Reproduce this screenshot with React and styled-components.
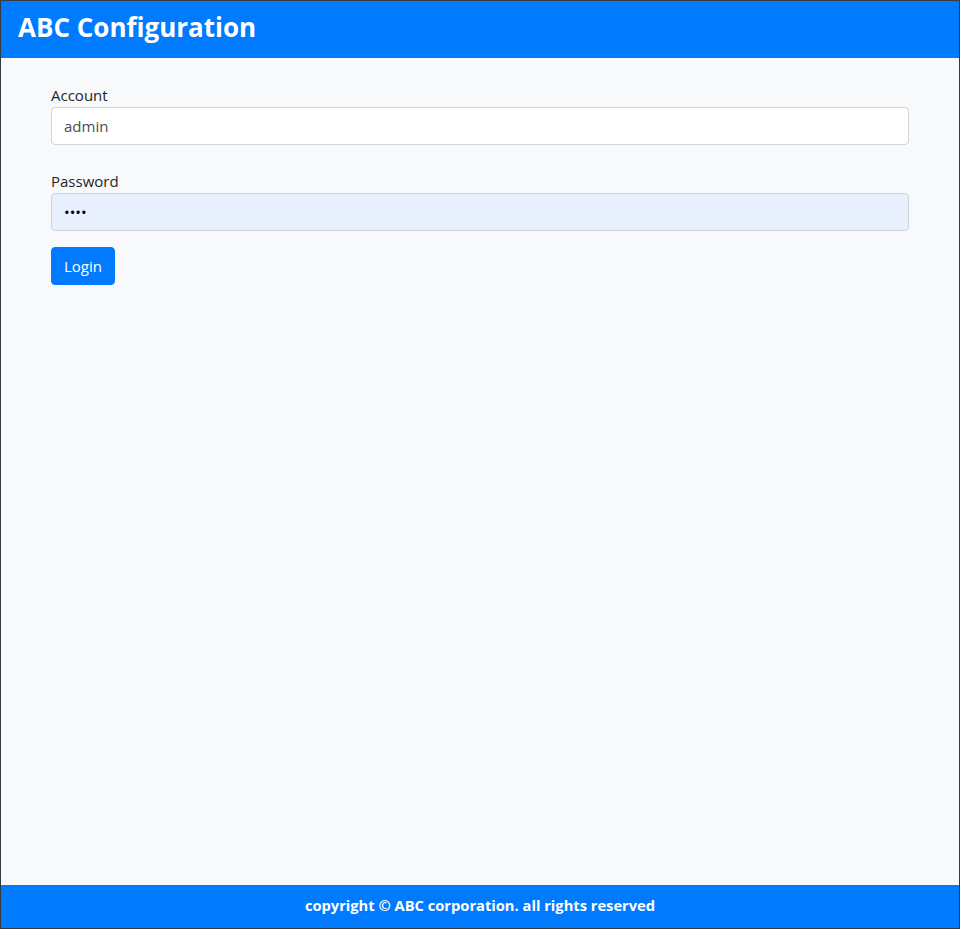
import React from "react";
import styled, { createGlobalStyle } from "styled-components";

const GlobalStyle = createGlobalStyle`
  html, body {
    margin: 0;
    padding: 0;
  }
  body {
    font-family: "Open Sans", "Noto Sans", sans-serif;
    font-size: 15px;
    color: #212529;
  }
  * {
    box-sizing: border-box;
  }
`;

const App = () => {
  return (
    <Page>
      <GlobalStyle />
      <Header>
        <Brand>ABC Configuration</Brand>
      </Header>
      <Main>
        <Form onSubmit={(e) => e.preventDefault()}>
          <Group>
            <Label htmlFor="account">Account</Label>
            <Input id="account" type="text" defaultValue="admin" />
          </Group>
          <Group last>
            <Label htmlFor="password">Password</Label>
            <Input id="password" type="password" defaultValue="1234" autofill />
          </Group>
          <Button type="submit">Login</Button>
        </Form>
      </Main>
      <Footer>copyright © ABC corporation. all rights reserved</Footer>
    </Page>
  );
};

const Page = styled.div`
  height: 929px;
  border: 1px solid #343a40;
  display: flex;
  flex-direction: column;
  background-color: #f8f9fa;
`;

const Header = styled.header`
  height: 57px;
  background-color: #007bff;
  display: flex;
  align-items: center;
  padding: 0 17px 5px;
`;

const Brand = styled.h1`
  margin: 0;
  color: #fff;
  font-size: 26px;
  font-weight: 700;
`;

const Main = styled.main`
  flex: 1;
  padding: 25px 50px;
`;

const Form = styled.form``;

const Group = styled.div`
  margin-bottom: ${(p) => (p.last ? "16px" : "24px")};
`;

const Label = styled.label`
  display: block;
  line-height: 24px;
`;

const Input = styled.input`
  display: block;
  width: 100%;
  height: 38px;
  padding: 6px 12px;
  font-family: inherit;
  font-size: 15px;
  color: ${(p) => (p.autofill ? "#000" : "#495057")};
  background-color: ${(p) => (p.autofill ? "#e8f0fe" : "#fff")};
  border: 1px solid #ced4da;
  border-radius: 4px;
  outline: none;
`;

const Button = styled.button`
  height: 38px;
  padding: 0 12px;
  font-family: inherit;
  font-size: 15px;
  color: #fff;
  background-color: #007bff;
  border: 1px solid #007bff;
  border-radius: 4px;
`;

const Footer = styled.footer`
  height: 43px;
  background-color: #007bff;
  color: #fff;
  font-size: 14.7px;
  font-weight: 700;
  display: flex;
  align-items: center;
  justify-content: center;
  padding-bottom: 4px;
`;

export default App;
